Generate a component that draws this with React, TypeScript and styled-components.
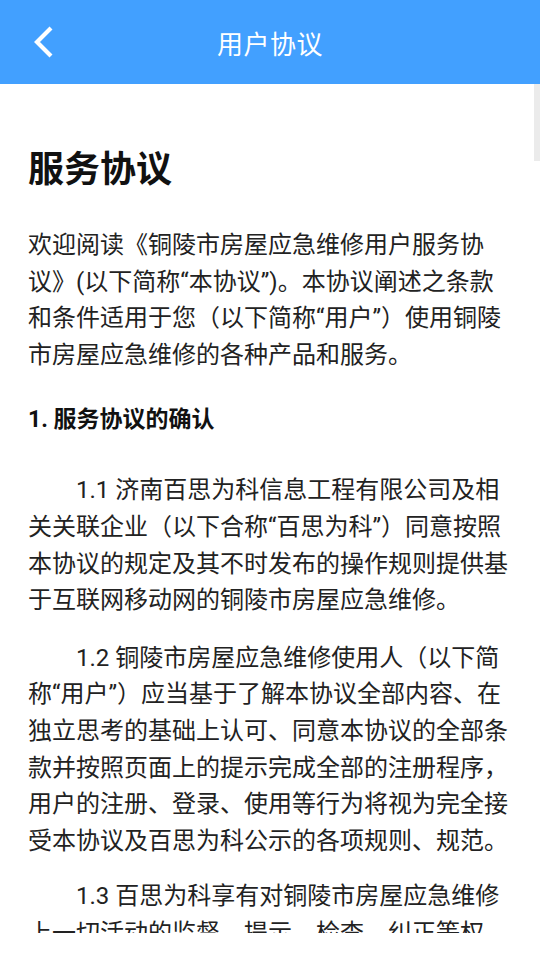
import styled, { createGlobalStyle } from 'styled-components'

const GlobalStyle = createGlobalStyle`
  html, body {
    margin: 0;
    padding: 0;
    background: #fff;
  }
  body {
    font-family: Roboto, "Noto Sans CJK SC", sans-serif;
  }
`

const Page = styled.div`
  width: 540px;
  height: 960px;
  display: flex;
  flex-direction: column;
  background: #fff;
`

const TopBar = styled.header`
  height: 84px;
  flex-shrink: 0;
  background: #42a0ff;
  display: flex;
  align-items: center;
  justify-content: center;
  position: relative;
`

const BackButton = styled.button`
  position: absolute;
  left: 24px;
  top: 20px;
  width: 40px;
  height: 44px;
  border: none;
  background: transparent;
  padding: 0;
  display: flex;
  align-items: center;
  justify-content: center;
`

const Title = styled.h1`
  margin: 0;
  color: #fff;
  font-size: 26px;
  font-weight: 400;
  letter-spacing: 0.5px;
`

const Viewport = styled.div`
  height: 849px;
  overflow: hidden;
  position: relative;
`

const ScrollThumb = styled.div`
  position: absolute;
  right: 0;
  top: 0;
  width: 6px;
  height: 77px;
  background: #ebebeb;
`

const Article = styled.article`
  padding: 0 28px;
  color: #222;
`

const Heading = styled.h2`
  margin: 64px 0 0;
  font-size: 36px;
  line-height: 44px;
  font-weight: 700;
  color: #111;
`

const SectionTitle = styled.h3`
  margin: 29px 0 0;
  font-size: 23px;
  line-height: 36px;
  font-weight: 700;
  color: #111;
`

const Para = styled.p<{ $indent?: boolean; $gap: number }>`
  margin: ${p => p.$gap}px 0 0;
  font-size: 24px;
  line-height: 36.6px;
  text-indent: ${p => (p.$indent ? '2em' : '0')};
`

const App = () => {
  return (
    <Page>
      <GlobalStyle />
      <TopBar>
        <BackButton aria-label="返回">
          <svg width="24" height="36" viewBox="0 0 24 36">
            <path d="M19 4 L5 18 L19 32" fill="none" stroke="#fff" strokeWidth="4.2" />
          </svg>
        </BackButton>
        <Title>用户协议</Title>
      </TopBar>
      <Viewport>
        <ScrollThumb />
        <Article>
          <Heading>服务协议</Heading>
          <Para $gap={35}>
            欢迎阅读《铜陵市房屋应急维修用户服务协议》(以下简称“本协议”)。本协议阐述之条款和条件适用于您（以下简称“用户”）使用铜陵市房屋应急维修的各种产品和服务。
          </Para>
          <SectionTitle>1. 服务协议的确认</SectionTitle>
          <Para $indent $gap={34}>
            1.1 济南百思为科信息工程有限公司及相关关联企业（以下合称“百思为科”）同意按照本协议的规定及其不时发布的操作规则提供基于互联网移动网的铜陵市房屋应急维修。
          </Para>
          <Para $indent $gap={21}>
            1.2 铜陵市房屋应急维修使用人（以下简称“用户”）应当基于了解本协议全部内容、在独立思考的基础上认可、同意本协议的全部条款并按照页面上的提示完成全部的注册程序，用户的注册、登录、使用等行为将视为完全接受本协议及百思为科公示的各项规则、规范。
          </Para>
          <Para $indent $gap={19}>
            1.3 百思为科享有对铜陵市房屋应急维修上一切活动的监督、提示、检查、纠正等权利。
          </Para>
        </Article>
      </Viewport>
    </Page>
  )
}

export default App
